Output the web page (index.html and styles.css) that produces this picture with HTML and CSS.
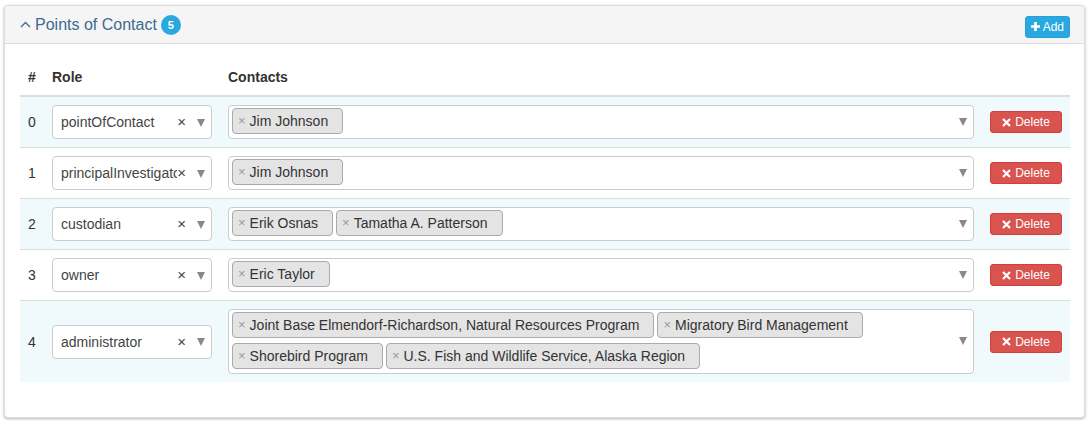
FILE: index.html
```html
<!DOCTYPE html>
<html>
<head>
<meta charset="utf-8">
<link rel="stylesheet" href="styles.css">
</head>
<body>
<div class="panel">
  <div class="panel-heading">
    <svg class="chev" width="11" height="7" viewBox="0 0 11 7"><polyline points="1,6 5.5,1.5 10,6" fill="none" stroke="#406a92" stroke-width="1.3"/></svg>
    <span class="title">Points of Contact</span>
    <span class="badge">5</span>
    <span class="spacer"></span>
    <button class="btn btn-add"><svg width="9" height="9" viewBox="0 0 9 9"><path d="M3.2 0h2.6v3.2H9v2.6H5.8V9H3.2V5.8H0V3.2h3.2z" fill="#fff"/></svg>Add</button>
  </div>
  <div class="panel-body">
    <table class="tbl">
      <colgroup><col class="c-num"><col class="c-role"><col class="c-contacts"><col class="c-del"></colgroup>
      <thead>
        <tr><th>#</th><th>Role</th><th>Contacts</th><th></th></tr>
      </thead>
      <tbody>
        <tr class="odd">
          <td>0</td>
          <td><div class="sel"><span class="sel-text">pointOfContact</span><span class="sel-clear">×</span><span class="arrow"></span></div></td>
          <td><div class="multi"><div class="tags"><span class="tag"><span class="tx">×</span>Jim Johnson</span></div><span class="arrow"></span></div></td>
          <td><button class="btn btn-del"><svg width="9" height="9" viewBox="0 0 9 9"><path d="M1 1L8 8M8 1L1 8" stroke="#fff" stroke-width="2.2"/></svg>Delete</button></td>
        </tr>
        <tr>
          <td>1</td>
          <td><div class="sel"><span class="sel-text">principalInvestigator</span><span class="sel-clear">×</span><span class="arrow"></span></div></td>
          <td><div class="multi"><div class="tags"><span class="tag"><span class="tx">×</span>Jim Johnson</span></div><span class="arrow"></span></div></td>
          <td><button class="btn btn-del"><svg width="9" height="9" viewBox="0 0 9 9"><path d="M1 1L8 8M8 1L1 8" stroke="#fff" stroke-width="2.2"/></svg>Delete</button></td>
        </tr>
        <tr class="odd">
          <td>2</td>
          <td><div class="sel"><span class="sel-text">custodian</span><span class="sel-clear">×</span><span class="arrow"></span></div></td>
          <td><div class="multi"><div class="tags"><span class="tag"><span class="tx">×</span>Erik Osnas</span><span class="tag"><span class="tx">×</span>Tamatha A. Patterson</span></div><span class="arrow"></span></div></td>
          <td><button class="btn btn-del"><svg width="9" height="9" viewBox="0 0 9 9"><path d="M1 1L8 8M8 1L1 8" stroke="#fff" stroke-width="2.2"/></svg>Delete</button></td>
        </tr>
        <tr>
          <td>3</td>
          <td><div class="sel"><span class="sel-text">owner</span><span class="sel-clear">×</span><span class="arrow"></span></div></td>
          <td><div class="multi"><div class="tags"><span class="tag"><span class="tx">×</span>Eric Taylor</span></div><span class="arrow"></span></div></td>
          <td><button class="btn btn-del"><svg width="9" height="9" viewBox="0 0 9 9"><path d="M1 1L8 8M8 1L1 8" stroke="#fff" stroke-width="2.2"/></svg>Delete</button></td>
        </tr>
        <tr class="odd">
          <td>4</td>
          <td><div class="sel"><span class="sel-text">administrator</span><span class="sel-clear">×</span><span class="arrow"></span></div></td>
          <td><div class="multi"><div class="tags"><span class="tag"><span class="tx">×</span>Joint Base Elmendorf-Richardson, Natural Resources Program</span><span class="tag"><span class="tx">×</span>Migratory Bird Management</span><span class="tag"><span class="tx">×</span>Shorebird Program</span><span class="tag"><span class="tx">×</span>U.S. Fish and Wildlife Service, Alaska Region</span></div><span class="arrow"></span></div></td>
          <td><button class="btn btn-del"><svg width="9" height="9" viewBox="0 0 9 9"><path d="M1 1L8 8M8 1L1 8" stroke="#fff" stroke-width="2.2"/></svg>Delete</button></td>
        </tr>
      </tbody>
    </table>
  </div>
</div>
</body>
</html>
```
FILE: styles.css
```css
* { box-sizing: border-box; }
html, body { margin: 0; padding: 0; background: #fff; }
body {
  font-family: "Liberation Sans", Arial, sans-serif;
  font-size: 14px;
  line-height: 20px;
  color: #333;
  padding: 5px 4px 3px 4px;
}
.panel {
  border: 1px solid #ddd;
  border-radius: 4px;
  box-shadow: 0 1px 3px rgba(0,0,0,0.3);
  background: #fff;
}
.panel-heading {
  display: flex;
  align-items: center;
  background: #f5f5f5;
  border-bottom: 1px solid #ddd;
  border-radius: 3px 3px 0 0;
  height: 38px;
  padding: 1px 14px 0 15px;
}
.chev { margin-right: 4px; margin-top: -1px; }
.title {
  font-size: 16px;
  color: #406a92;
}
.badge {
  display: inline-flex;
  align-items: center;
  justify-content: center;
  width: 20px;
  height: 20px;
  border-radius: 10px;
  background: #2aa8e0;
  color: #fff;
  font-size: 11px;
  font-weight: bold;
  margin-left: 4px;
}
.spacer { flex: 1; }
.btn {
  font-family: inherit;
  font-size: 12px;
  line-height: 18px;
  color: #fff;
  border-radius: 3px;
  padding: 1px 5px;
  display: inline-flex;
  align-items: center;
  cursor: pointer;
}
.btn svg { margin-right: 3px; }
.btn-add {
  background: #2aa8e0;
  border: 1px solid #2a9fd6;
  height: 22px;
  margin-top: 3px;
}
.btn-del {
  background: #d9534f;
  border: 1px solid #d43f3a;
  height: 22px;
  width: 72px;
  justify-content: center;
  padding: 1px 5px;
}
.btn-del svg { margin-right: 4px; }
.panel-body { padding: 15px 15px 15px 15px; }
.tbl {
  width: 1050px;
  border-collapse: collapse;
  margin-bottom: 20px;
  table-layout: fixed;
}
.c-num { width: 24px; }
.c-role { width: 176px; }
.c-del { width: 88px; }
.tbl th {
  text-align: left;
  font-weight: bold;
  padding: 8px;
  border-bottom: 2px solid #ddd;
  line-height: 20px;
}
.tbl td {
  padding: 8px;
  vertical-align: middle;
  border-top: 1px solid #ddd;
}
.tbl tbody tr:first-child td { border-top: 0; }
.tbl tr.odd td { background: #f0f9fc; }
.sel {
  position: relative;
  display: flex;
  align-items: center;
  height: 34px;
  border: 1px solid #ccc;
  border-radius: 4px;
  background: #fff;
  padding: 0 6px 0 8px;
  color: #444;
}
.sel-text { flex: 1; overflow: hidden; white-space: nowrap; margin-right: 20px; }
.sel-clear {
  position: absolute;
  right: 25px;
  top: 6px;
  color: #444;
  font-size: 15px;
  line-height: 20px;
  background: transparent;
}
.arrow {
  width: 0; height: 0;
  border-left: 4px solid transparent;
  border-right: 4px solid transparent;
  border-top: 8px solid #888;
  margin-top: 1px;
}
.multi {
  display: flex;
  align-items: center;
  min-height: 34px;
  border: 1px solid #ccc;
  border-radius: 4px;
  background: #fff;
  padding: 2px 6px 4px 3px;
}
.tags {
  flex: 1;
  display: flex;
  flex-wrap: wrap;
  gap: 5px 3px;
}
.tag {
  display: inline-flex;
  align-items: center;
  height: 26px;
  background: #e4e4e4;
  border: 1px solid #aaa;
  border-radius: 4px;
  padding: 0 14px 0 5px;
  color: #333;
}
.tx { color: #999; font-size: 13px; margin-right: 4px; }
```
